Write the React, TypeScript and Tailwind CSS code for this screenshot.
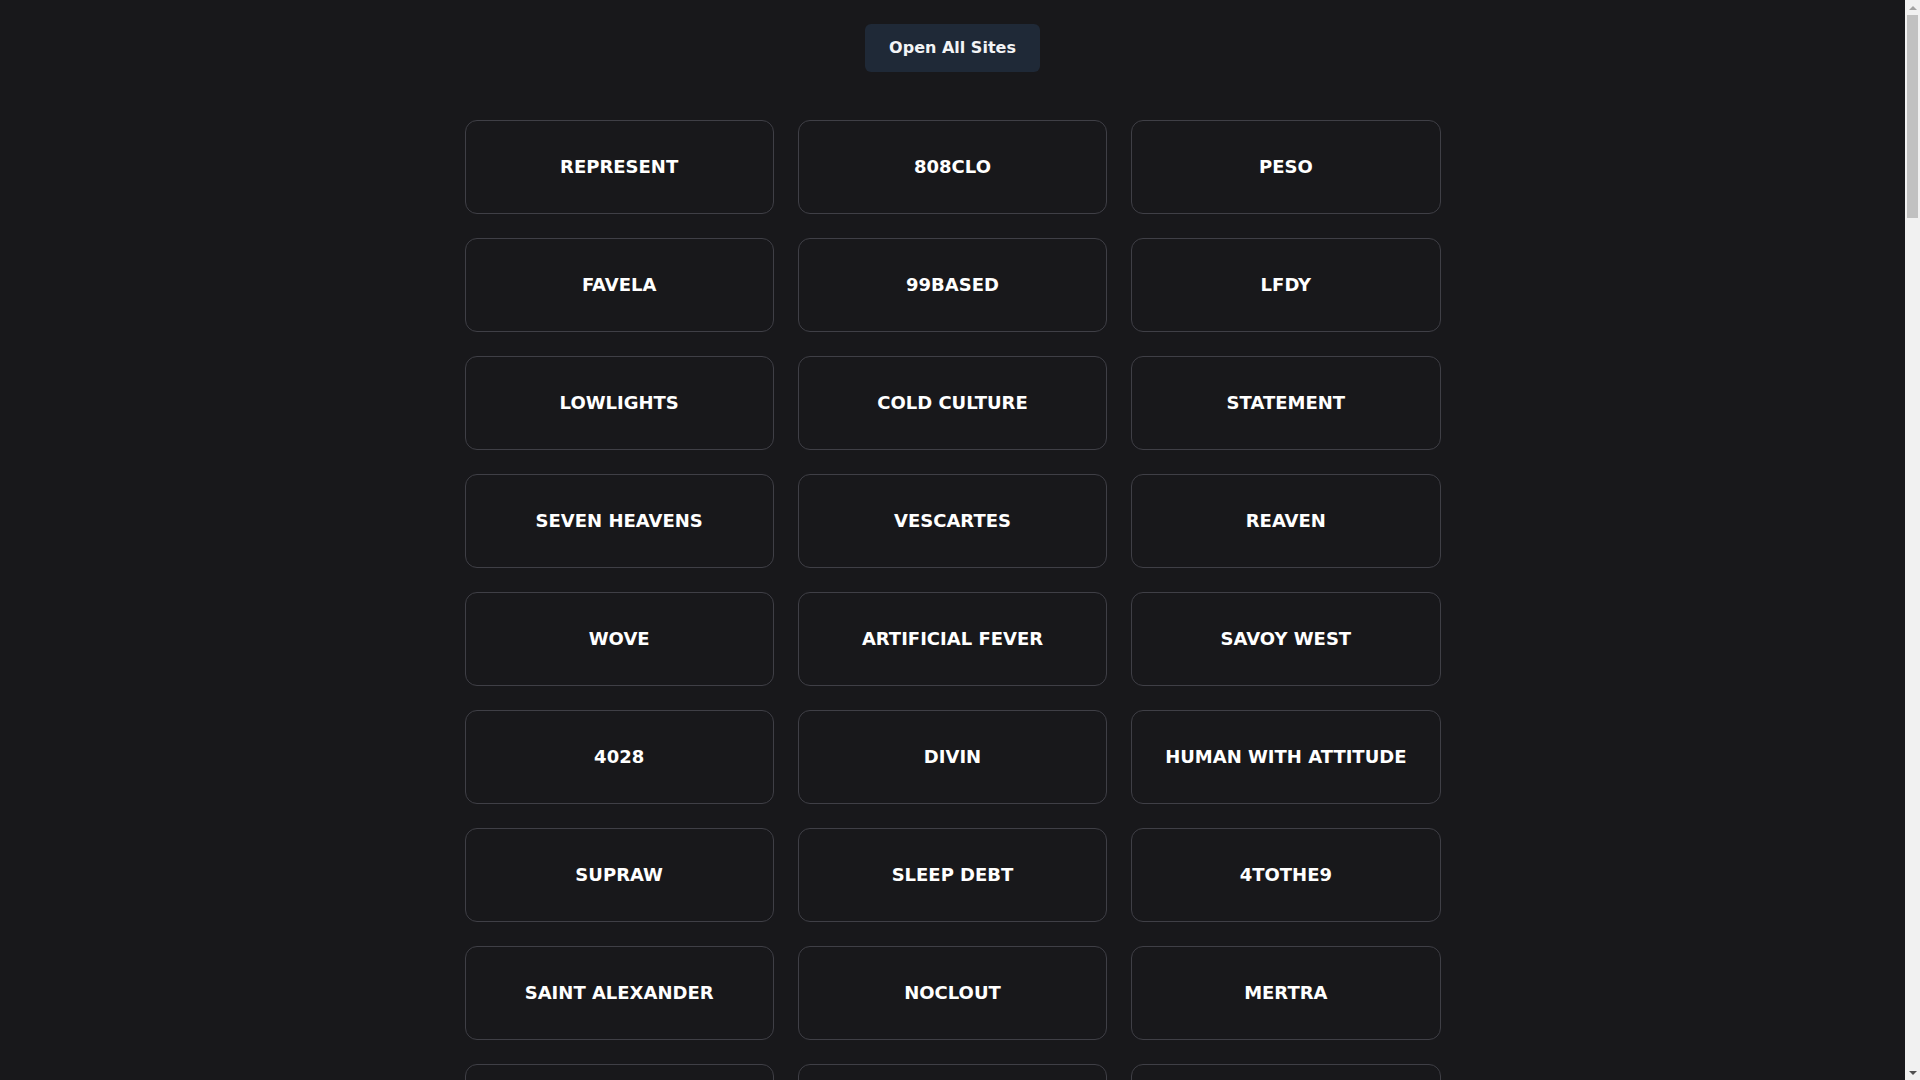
import React from 'react'

const sites = [
  'Represent', '808CLO', 'Peso',
  'Favela', '99Based', 'LFDY',
  'Lowlights', 'Cold Culture', 'Statement',
  'Seven Heavens', 'Vescartes', 'Reaven',
  'Wove', 'Artificial Fever', 'Savoy West',
  '4028', 'Divin', 'Human With Attitude',
  'Supraw', 'Sleep Debt', '4Tothe9',
  'Saint Alexander', 'Noclout', 'Mertra',
  // further down the page
  'Corteiz', 'Broken Planet', 'Minus Two',
  'Syna World', 'Trapstar', 'Hellstar',
  'Denim Tears', 'Empty Kingdom', 'Vale Forever',
  'Unknown London', 'Carsicko', 'Nahmias',
  'Revenge', 'Warren Lotas', 'Jaded London',
  'Vertabrae', 'Protect LA', 'Gallery Dept',
  'Rhude', 'Stussy', 'Palace',
  'Kith', 'Noah', 'Aime Leon Dore',
  'Fear Of God', 'Essentials', 'Cole Buxton',
  'Entire Studios', 'Askyurself', 'Give Me Space',
  'Chrome Hearts', 'Enfants Riches', 'Who Decides War',
  'Sicko', 'Madhappy', 'Pleasures',
  'Online Ceramics', 'Market', 'Brain Dead',
  'Stray Rats', 'Bianca Chandon', 'Awake NY',
  'Only NY', 'Better Gift Shop', 'Ksubi',
  'Purple Brand', 'Amiri', 'Mnml',
  'Vlone', 'Anti Social', 'Cactus Jack',
  'Eric Emanuel', 'Godspeed', 'Born X Raised',
  'Cav Empt', 'Wacko Maria', 'Neighborhood',
  'Human Made', 'Bape', 'Kapital',
  'Aries', 'Places Plus Faces', 'Daily Paper',
  'Axel Arigato', 'Arte Antwerp', 'Olaf Hussein',
  'Pas Normal', 'Ader Error', 'Thisisneverthat',
  'Misbhv', 'Rassvet', 'Paccbet',
  'Heron Preston', 'Alyx', 'Off Studio',
  'Mowalola', 'Martine Rose', 'Wales Bonner',
  'Liberal Youth', 'Fuck The Population', 'Perks And Mini',
  'Unknown Pleasures', 'Ill Culture', 'Nude Project',
  'Bershka Lab', 'Pompeii', 'Hidden Club',
  'Mixed Signals', 'Blue Sky Inn', 'Loverboy',
  'Bluemarble', 'Nahnah', 'Ottolinger',
  'Misfits Club', 'Palm Society', 'Studio Nine',
  'Drole', 'Jacquemus Club', 'Avant Toi',
  'Night Shift', 'Low Season', 'Late Checkout',
  'Casablanca', 'Wasted Paris', 'Grimey',
  'Iuter', 'Octopus', 'Carhartt WIP',
  'Obey', 'Huf', 'Dime',
]

// stand-in for the browser's classic scrollbar seen in the screenshot
function ScrollRail() {
  return (
    <div className="w-[15px] shrink-0 h-screen bg-[#f1f1f1] flex flex-col items-center">
      <div className="h-[15px] flex items-center justify-center">
        <div className="w-0 h-0 border-l-[4px] border-r-[4px] border-b-[4px] border-l-transparent border-r-transparent border-b-[#a3a3a3]" />
      </div>
      <div className="w-[11px] h-[203px] bg-[#c1c1c1]" />
      <div className="flex-1" />
      <div className="h-[15px] flex items-center justify-center">
        <div className="w-0 h-0 border-l-[4px] border-r-[4px] border-t-[4px] border-l-transparent border-r-transparent border-t-[#505050]" />
      </div>
    </div>
  )
}

export default function App() {
  const openAll = () => {}

  return (
    <div
      className="flex h-screen overflow-hidden bg-[#18181b] text-white"
      style={{ fontFamily: '"DejaVu Sans", "Noto Sans", sans-serif' }}
    >
      <div className="flex-1 min-w-0 h-screen overflow-y-auto">
        <div className="py-6">
          {/* top action */}
          <div className="flex justify-center mb-12">
            <button
              onClick={openAll}
              className="h-12 px-6 rounded-md bg-[#1f2937] text-base font-bold text-gray-100 hover:bg-gray-700"
            >
              Open All Sites
            </button>
          </div>

          {/* site grid */}
          <div className="max-w-5xl mx-auto px-6">
            <div className="grid grid-cols-3 gap-6">
              {sites.map((name) => (
                <a
                  key={name}
                  href="#"
                  className="flex items-center justify-center h-[94px] rounded-xl border border-[#3f3f46] bg-[#18181b] hover:bg-[#27272a] transition-colors"
                >
                  <span className="text-lg font-bold uppercase text-white">
                    {name}
                  </span>
                </a>
              ))}
            </div>
          </div>
        </div>
      </div>
      <ScrollRail />
    </div>
  )
}
